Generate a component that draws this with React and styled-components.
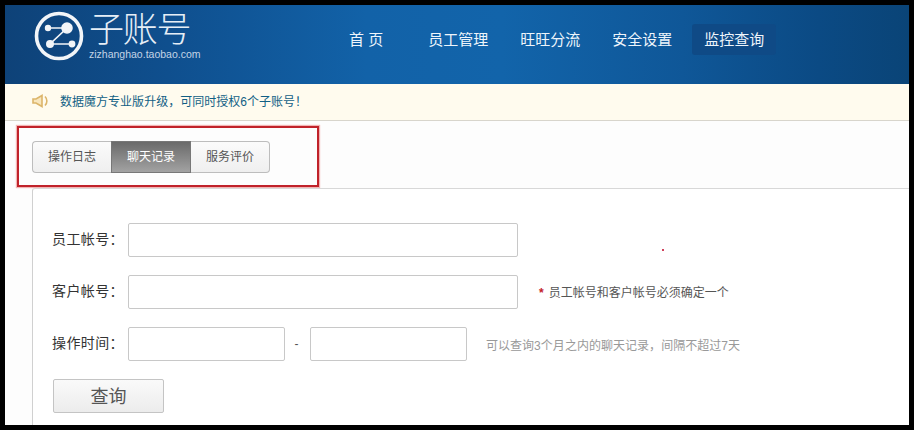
import React from "react";
import styled, { createGlobalStyle } from "styled-components";

const FONT = `"Liberation Sans", "Noto Sans CJK SC", sans-serif`;

const GlobalStyle = createGlobalStyle`
	html, body {
		margin: 0;
		padding: 0;
		background: #000;
	}
	body {
		font-family: ${ FONT };
		width: 914px;
		height: 430px;
		overflow: hidden;
	}
`;

const Frame = styled.div`
	box-sizing: border-box;
	width: 914px;
	height: 430px;
	padding: 5px;
	background: #000;
`;

const Page = styled.div`
	width: 904px;
	height: 420px;
	overflow: hidden;
	background: #fdfdfd;
`;

const Header = styled.header`
	display: flex;
	height: 79px;
	background: linear-gradient( 90deg, #0e4278 0%, #0f4f8e 18%, #1262a8 40%, #1264aa 55%, #0f5798 75%, #0b4a84 90%, #0a4477 100% );
`;

const Logo = styled.div`
	display: flex;
	align-items: flex-start;
	width: 332px;
	padding: 6px 0 0 29px;
	box-sizing: border-box;
`;

const LogoText = styled.div`
	display: flex;
	flex-direction: column;
	margin-left: 5px;
	color: #e6eef6;
`;

const LogoTitle = styled.span`
	font-size: 35px;
	line-height: 37px;
	letter-spacing: -1.2px;
	font-weight: 300;
`;

const LogoUrl = styled.span`
	font-size: 10.5px;
	line-height: 13px;
	margin-top: 0;
	color: #c3d4e6;
`;

const Nav = styled.nav`
	display: flex;
	align-items: flex-start;
	padding-top: 19px;
`;

const NavItem = styled.a`
	display: block;
	box-sizing: border-box;
	height: 31px;
	line-height: 31px;
	padding: 0 12px;
	margin-right: ${ props => props.$gap }px;
	font-size: 15px;
	color: #eef5fb;
	white-space: pre;
	border-radius: 3px;
	background: ${ props => props.$active ? "#0f4a86" : "transparent" };
`;

const Notice = styled.div`
	display: flex;
	align-items: center;
	box-sizing: border-box;
	height: 37px;
	padding: 0 0 3px 27px;
	background: #fffbee;
	border-bottom: 1px solid #d8d5cc;
`;

const NoticeText = styled.span`
	margin-left: 10px;
	font-size: 12px;
	letter-spacing: 0.02px;
	color: #115f85;
`;

const Highlight = styled.div`
	box-sizing: border-box;
	width: 302px;
	height: 61px;
	margin: 5px 0 0 12px;
	padding: 14px 0 0 14px;
	border: 1px solid #c0222a;
	outline: 1px solid #c0222a;
	outline-offset: -2px;
	box-shadow: 0 0 1px 1px #f3b4b4;
`;

const Tabs = styled.div`
	display: flex;
	width: 238px;
	height: 32px;
`;

const Tab = styled.div`
	flex: 1;
	box-sizing: border-box;
	line-height: 30px;
	text-align: center;
	font-size: 12px;
	color: ${ props => props.$active ? "#fff" : "#555" };
	background: ${ props => props.$active
		? "linear-gradient( #6a6a6a, #a2a2a2 )"
		: "linear-gradient( #fbfbfb, #efefef )" };
	border: 1px solid ${ props => props.$active ? "#777" : "#bdbdbd" };
	border-width: 1px ${ props => props.$active ? "1px" : "0" } 1px ${ props => props.$active ? "1px" : "0" };

	&:first-child {
		border-left-width: 1px;
		border-radius: 4px 0 0 4px;
	}

	&:last-child {
		border-right-width: 1px;
		border-radius: 0 4px 4px 0;
	}
`;

const Panel = styled.section`
	box-sizing: border-box;
	height: 240px;
	margin: 1px 0 0 27px;
	padding: 34px 0 0 20px;
	background: #fff;
	border-left: 1px solid #d0d0d0;
	border-top: 1px solid #d8d8d8;
	border-top-left-radius: 3px;
`;

const Row = styled.div`
	display: flex;
	align-items: center;
	height: 34px;
	margin-bottom: 18px;
`;

const Label = styled.label`
	width: 76px;
	margin-left: -1px;
	padding-bottom: 4px;
	font-size: 14px;
	letter-spacing: 0.4px;
	color: #333;
	white-space: nowrap;
`;

const Input = styled.input`
	box-sizing: border-box;
	display: block;
	width: ${ props => props.$short ? 157 : 390 }px;
	height: 34px;
	padding: 0 6px;
	background: #fff;
	border: 1px solid #c8c8c8;
	border-radius: 2px;
	outline: none;
`;

const Dash = styled.span`
	width: 25px;
	padding-right: 2px;
	box-sizing: border-box;
	text-align: center;
	font-size: 12px;
	color: #555;
`;

const Required = styled.span`
	margin-left: 21px;
	padding-bottom: 2px;
	font-size: 12px;
	color: #555;
`;

const Star = styled.b`
	margin-right: 5px;
	color: #c3202a;
`;

const Hint = styled.span`
	margin-left: 19px;
	font-size: 12px;
	letter-spacing: 0.03px;
	color: #999;
`;

const SearchButton = styled.button`
	display: block;
	box-sizing: border-box;
	width: 111px;
	height: 34px;
	padding: 0 0 3px;
	font-family: ${ FONT };
	font-size: 18px;
	color: #555;
	background: linear-gradient( #fafafa, #ececec );
	border: 1px solid #c4c4c4;
	border-radius: 2px;
`;

const Dot = styled.i`
	position: absolute;
	left: 662px;
	top: 249px;
	width: 2px;
	height: 2px;
	background: #d0405a;
`;

const navItems = [
	{ label: "首 页", gap: 21 },
	{ label: "员工管理", gap: 8 },
	{ label: "旺旺分流", gap: 8 },
	{ label: "安全设置", gap: 8 },
	{ label: "监控查询", active: true, gap: 0 },
];

const tabs = [ "操作日志", "聊天记录", "服务评价" ];

/**
 * Draws the round logo with the linked nodes.
 *
 * @returns {React.Component} The logo mark.
 */
function LogoMark() {
	return (
		<svg width="50" height="50" viewBox="0 0 50 50">
			<circle cx="25" cy="25" r="22.5" fill="none" stroke="#f2f5f8" strokeWidth="3.6" />
			<g stroke="#f2f5f8" strokeWidth="1.6" fill="#f2f5f8">
				<path d="M14 17H33L16 33H38" fill="none" />
				<circle cx="14" cy="17" r="2.4" />
				<circle cx="33" cy="17" r="5" />
				<circle cx="16" cy="33" r="3.2" />
				<circle cx="38" cy="33" r="2.6" />
			</g>
		</svg>
	);
}

/**
 * Draws the speaker icon of the notice bar.
 *
 * @returns {React.Component} The speaker icon.
 */
function SpeakerIcon() {
	return (
		<svg width="18" height="14" viewBox="0 0 18 14" fill="none" stroke="#dcb56a" strokeWidth="1.6">
			<path d="M1 5H4L10 1.5V12.5L4 9H1Z" fill="#f8e6bd" />
			<path d="M13 2.5C15.5 5 15.5 9 13 11.5" />
		</svg>
	);
}

export default function App() {
	return (
		<Frame>
			<GlobalStyle />
			<Page>
				<Header>
					<Logo>
						<LogoMark />
						<LogoText>
							<LogoTitle>子账号</LogoTitle>
							<LogoUrl>zizhanghao.taobao.com</LogoUrl>
						</LogoText>
					</Logo>
					<Nav>
						{ navItems.map( item => (
							<NavItem key={ item.label } $active={ item.active } $gap={ item.gap }>{ item.label }</NavItem>
						) ) }
					</Nav>
				</Header>
				<Notice>
					<SpeakerIcon />
					<NoticeText>数据魔方专业版升级，可同时授权6个子账号！</NoticeText>
				</Notice>
				<Highlight>
					<Tabs>
						{ tabs.map( tab => <Tab key={ tab } $active={ tab === "聊天记录" }>{ tab }</Tab> ) }
					</Tabs>
				</Highlight>
				<Panel>
					<Row>
						<Label>员工帐号：</Label>
						<Input />
					</Row>
					<Row>
						<Label>客户帐号：</Label>
						<Input />
						<Required><Star>*</Star>员工帐号和客户帐号必须确定一个</Required>
					</Row>
					<Row>
						<Label>操作时间：</Label>
						<Input $short={ true } />
						<Dash>-</Dash>
						<Input $short={ true } />
						<Hint>可以查询3个月之内的聊天记录，间隔不超过7天</Hint>
					</Row>
					<SearchButton>查询</SearchButton>
				</Panel>
			</Page>
			<Dot />
		</Frame>
	);
}
